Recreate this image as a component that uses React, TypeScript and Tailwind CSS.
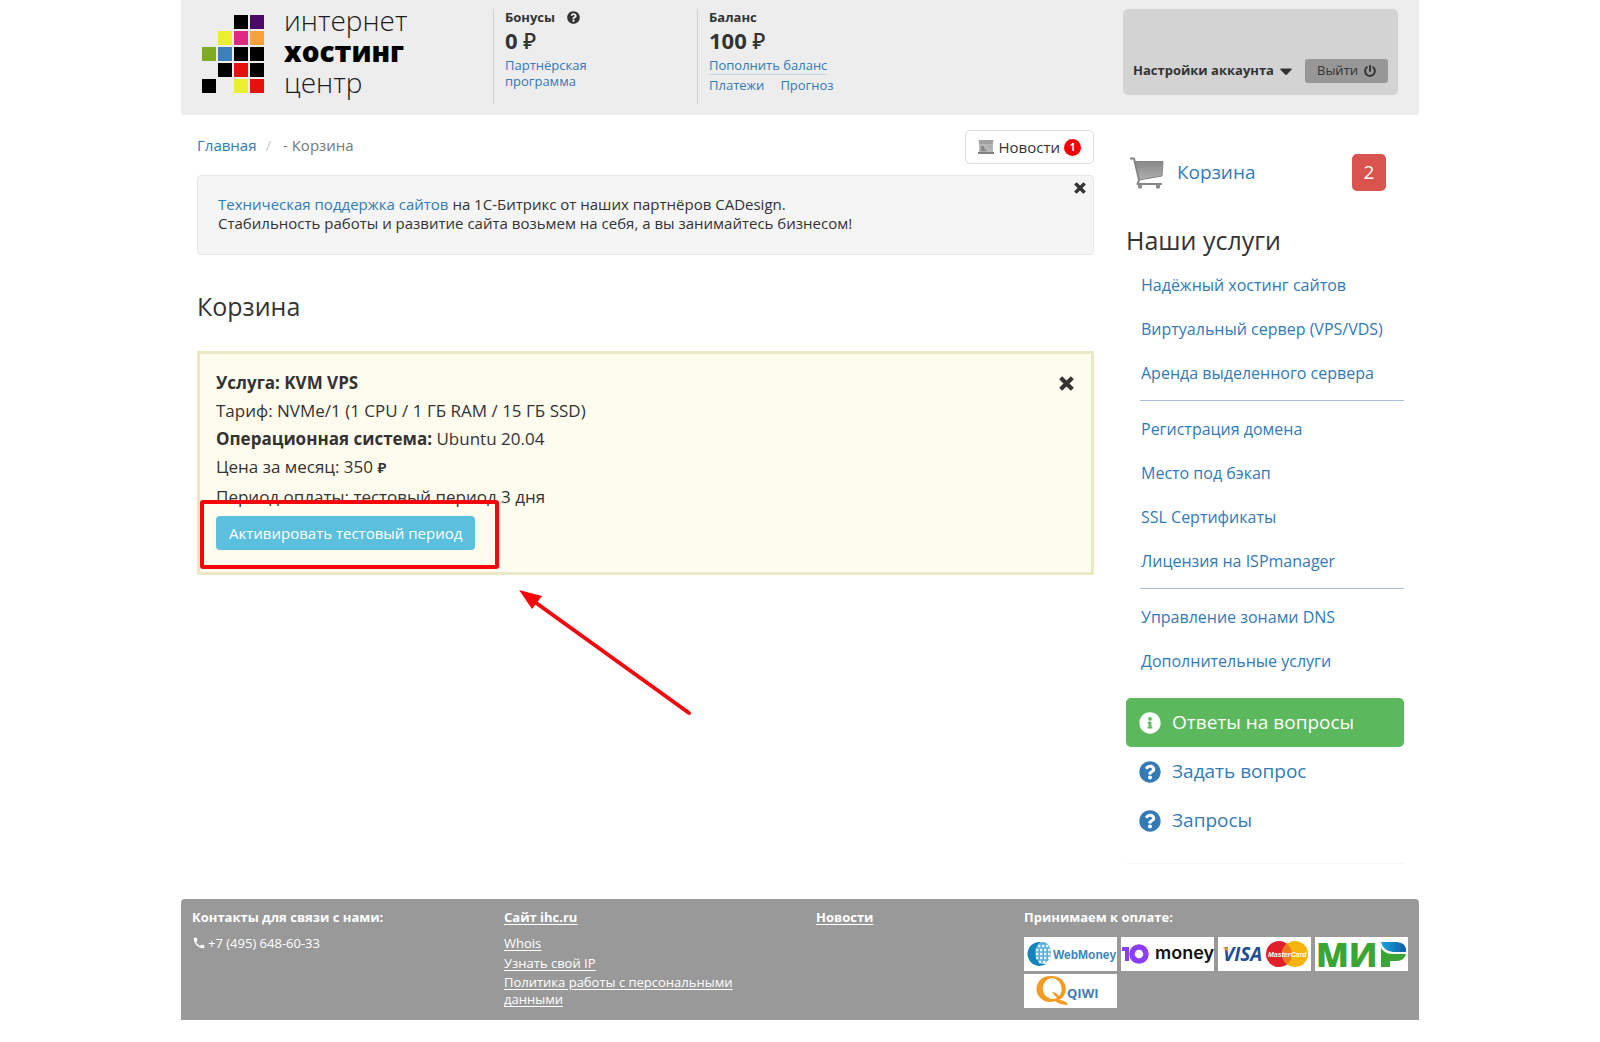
import React from "react";
import { FaInfoCircle, FaPowerOff, FaQuestionCircle, FaCaretDown } from "react-icons/fa";
import { MdCall } from "react-icons/md";

const logoCells: [number, number, string][] = [
  [2, 0, "#000000"], [3, 0, "#4b0a63"],
  [1, 1, "#eaf02f"], [2, 1, "#dd2a80"], [3, 1, "#f9a13a"],
  [0, 2, "#7eab22"], [1, 2, "#3c7fba"], [2, 2, "#000000"], [3, 2, "#000000"],
  [1, 3, "#000000"], [2, 3, "#e5120c"], [3, 3, "#000000"],
  [0, 4, "#000000"], [2, 4, "#eaf02f"], [3, 4, "#e5120c"],
];

const serviceGroups = [
  ["Надёжный хостинг сайтов", "Виртуальный сервер (VPS/VDS)", "Аренда выделенного сервера"],
  ["Регистрация домена", "Место под бэкап", "SSL Сертификаты", "Лицензия на ISPmanager"],
  ["Управление зонами DNS", "Дополнительные услуги"],
];

function CrossIcon({ className }: { className: string }) {
  return (
    <svg viewBox="0 0 14 14" className={className} aria-hidden="true">
      <path d="M3 3L11 11M11 3L3 11" stroke="currentColor" strokeWidth="4" strokeLinecap="square" />
    </svg>
  );
}

function Logo() {
  return (
    <a href="#" className="flex items-start gap-[20px]">
      <svg viewBox="0 0 62 78" className="mt-[15px] h-[78px] w-[62px]" aria-hidden="true">
        {logoCells.map(([c, r, fill]) => (
          <rect key={`${c}-${r}`} x={c * 16} y={r * 16} width="14" height="14" fill={fill} />
        ))}
      </svg>
      <span className="mt-[5px] flex flex-col text-[28px] leading-[31px] text-[#1c1c1c]">
        <span className="font-light">интернет</span>
        <span className="font-extrabold text-black">хостинг</span>
        <span className="font-light">центр</span>
      </span>
    </a>
  );
}

function Header() {
  return (
    <header className="flex h-[115px] rounded-b-xs bg-[#ededed]">
      <div className="w-[312px] shrink-0 pl-[21px]">
        <Logo />
      </div>
      <div className="mt-[9px] h-[95px] w-[204px] shrink-0 border-l border-[#d0d0d0] pl-[11px] text-[13px]">
        <div className="flex h-[17px] items-center gap-[12px] font-bold">
          Бонусы <FaQuestionCircle className="size-[13px]" />
        </div>
        <div className="text-[22px] leading-[28px]">
          <b>0</b> <span className="font-medium">₽</span>
        </div>
        <a href="#" className="mt-[3px] block w-[110px] leading-4 text-[#337ab7]">
          Партнёрская программа
        </a>
      </div>
      <div className="mt-[9px] h-[95px] border-l border-[#d0d0d0] pl-[11px] text-[13px]">
        <div className="flex h-[17px] items-center font-bold">Баланс</div>
        <div className="text-[22px] leading-[28px]">
          <b>100</b> <span className="font-medium">₽</span>
        </div>
        <a href="#" className="mt-[3px] block w-fit border-b border-[#c5d5e4] leading-[17px] text-[#337ab7]">
          Пополнить баланс
        </a>
        <div className="flex gap-[16px] leading-[20px] text-[#337ab7]">
          <a href="#">Платежи</a>
          <a href="#">Прогноз</a>
        </div>
      </div>
      <div className="mt-[9px] mr-[21px] ml-auto flex h-[86px] w-[275px] items-end justify-between rounded-[5px] bg-[#d3d3d3] pr-[10px] pb-[12px] pl-[10px] text-[13px]">
        <button type="button" className="flex h-6 items-center gap-[4px] font-bold">
          Настройки аккаунта <FaCaretDown className="h-[20px] w-[16px]" />
        </button>
        <button type="button" className="flex h-6 w-[83px] items-center justify-center gap-[6px] rounded-[3px] bg-[#979797]">
          Выйти <FaPowerOff className="size-[12px]" />
        </button>
      </div>
    </header>
  );
}

function NewsIcon() {
  return (
    <svg viewBox="0 0 16 14" className="h-[14px] w-[16px]" aria-hidden="true">
      <path d="M0 0H16L15 2V12L16 14H0L1 12V2Z" fill="#b8b8b8" />
      <path d="M1 1H15M1 3H15" stroke="#8b8b8b" strokeWidth="1" />
      <path d="M3 6H6V8L9 11H3ZM10 6H14M10 8H14" fill="#858585" stroke="#999" strokeWidth="0.5" />
      <path d="M0 13H16" stroke="#808080" strokeWidth="2" />
    </svg>
  );
}

function CartIcon() {
  return (
    <svg viewBox="0 0 34 32" className="h-[32px] w-[34px]" aria-hidden="true">
      <defs>
        <linearGradient id="cart-fill" x1="0" y1="0" x2="0" y2="1">
          <stop offset="0" stopColor="#878787" />
          <stop offset="1" stopColor="#b0b0b0" />
        </linearGradient>
      </defs>
      <path d="M5 4H33L32 19L9 23Z" fill="url(#cart-fill)" />
      <path d="M0 1.500H4L9 23L7.500 27H32" fill="none" stroke="#858585" strokeWidth="2" strokeLinejoin="round" />
      <path d="M5 4.500H33L32 19L9 23" fill="none" stroke="#858585" strokeWidth="1" />
      <circle cx="10" cy="29.500" r="2.200" fill="#8c8c8c" />
      <circle cx="28" cy="29.500" r="2.200" fill="#8c8c8c" />
    </svg>
  );
}

function Annotation() {
  return (
    <>
      <div className="pointer-events-none absolute top-[146px] left-0 h-[69px] w-[299px] rounded-[3px] border-4 border-[#f5060a]" />
      <svg viewBox="0 0 176 130" className="pointer-events-none absolute top-[235px] left-[318px] h-[130px] w-[176px]" aria-hidden="true">
        <path d="M14 11L171 124" stroke="#f5060a" strokeWidth="4" strokeLinecap="round" />
        <path d="M1 1L24 7L14 20Z" fill="#f5060a" />
      </svg>
    </>
  );
}

function Main() {
  return (
    <main className="min-w-0 flex-1 pt-[15px]">
      <div className="flex items-start justify-between">
        <nav aria-label="breadcrumb" className="flex h-[30px] items-center text-[15px] text-[#777]">
          <a href="#" className="text-[#337ab7]">Главная</a>
          <span className="mr-[12px] ml-[9px] text-[#ccc]">/</span>
          <span>- Корзина</span>
        </nav>
        <button type="button" className="flex h-[34px] items-center gap-1 rounded-[5px] border border-[#ddd] px-[12px] text-[15px]">
          <NewsIcon />
          Новости
          <span className="flex size-[17px] items-center justify-center rounded-full bg-[#f50000] text-[10px] font-bold text-white">1</span>
        </button>
      </div>

      <section className="mt-[11px] flex h-[80px] items-start justify-between rounded-[4px] border border-[#e6e6e6] bg-[#f5f5f5] pr-[6px] pl-[20px]">
        <p className="mt-[19px] text-[15px] leading-[19px]">
          <a href="#" className="text-[#337ab7]">Техническая поддержка сайтов</a> на 1С-Битрикс от наших партнёров CADesign.
          <br />
          Стабильность работы и развитие сайта возьмем на себя, а вы занимайтесь бизнесом!
        </p>
        <button type="button" aria-label="Закрыть" className="mt-[5px] p-[1px]">
          <CrossIcon className="size-[12px]" />
        </button>
      </section>

      <h1 className="mt-[34px] text-[25px] leading-[34px]">Корзина</h1>

      <section className="relative mt-[28px] flex h-[224px] items-start justify-between border-3 border-[#ede7c3] bg-[#fefcee] pt-[15px] pr-[17px] pl-[16px]">
        <div className="text-[17px] leading-7">
          <p className="font-bold">Услуга: KVM VPS</p>
          <p>Тариф: NVMe/1 (1 CPU / 1 ГБ RAM / 15 ГБ SSD)</p>
          <p><b>Операционная система:</b> Ubuntu 20.04</p>
          <p>Цена за месяц: 350 <span className="text-[15px] font-semibold">₽</span></p>
          <p className="mt-[2px]">Период оплаты: тестовый период 3 дня</p>
          <button type="button" className="mt-[5px] flex h-[34px] items-center rounded-[4px] bg-[#5bc0de] px-[13px] text-[15px] text-white">
            Активировать тестовый период
          </button>
        </div>
        <button type="button" aria-label="Удалить" className="mt-[7px]">
          <CrossIcon className="size-[15px]" />
        </button>
        <Annotation />
      </section>
    </main>
  );
}

function Sidebar() {
  return (
    <aside className="w-[278px] shrink-0 pt-[39px]">
      <div className="flex h-[37px] items-center pr-[18px] pl-[4px]">
        <CartIcon />
        <a href="#" className="ml-[13px] text-[19px] text-[#337ab7]">Корзина</a>
        <span className="ml-auto flex h-[37px] w-[34px] items-center justify-center rounded-[5px] bg-[#d9534f] text-[19px] text-white">2</span>
      </div>
      <h2 className="mt-[32px] text-[25px] leading-[34px]">Наши услуги</h2>
      <div className="mt-[6px] pl-[14px]">
        {serviceGroups.map((group, i) => (
          <ul key={i} className="border-[#a9c0d9] not-first:mt-[5px] not-first:border-t not-first:pt-[6px]">
            {group.map((name) => (
              <li key={name} className="flex h-11 items-center pl-px text-[16px]">
                <a href="#" className="whitespace-nowrap text-[#337ab7]">{name}</a>
              </li>
            ))}
          </ul>
        ))}
      </div>
      <nav className="mt-[15px] flex flex-col border-b border-[#f7f7f7] pb-[18px] text-[19px] text-[#337ab7]">
        <a href="#" className="flex h-[49px] items-center gap-[11px] rounded-[5px] bg-[#5cb85c] pl-[13px] text-white">
          <FaInfoCircle className="size-[22px]" /> Ответы на вопросы
        </a>
        <a href="#" className="flex h-[49px] items-center gap-[11px] pl-[13px]">
          <FaQuestionCircle className="size-[22px]" /> Задать вопрос
        </a>
        <a href="#" className="flex h-[49px] items-center gap-[11px] pl-[13px]">
          <FaQuestionCircle className="size-[22px]" /> Запросы
        </a>
      </nav>
    </aside>
  );
}

function WebMoneyLogo() {
  return (
    <svg viewBox="0 0 93 34" role="img" aria-label="WebMoney" className="h-[34px] w-[93px] bg-white">
      <path d="M17 5A12 12 0 1 0 22 27Q12 27 12 17Q12 8 17 5Z" fill="#1583bd" />
      <ellipse cx="19" cy="15.500" rx="8" ry="10.500" fill="#5aaedb" />
      <path d="M14 9H25M12 13H27M12 17H27M12 21H26M15 25H23" stroke="#e8f5fc" strokeWidth="2.400" strokeDasharray="2.400 1.600" />
      <text x="29" y="22" fontFamily="Liberation Sans, sans-serif" fontWeight="700" fontSize="12" fill="#3c83b8">WebMoney</text>
    </svg>
  );
}

function YooMoneyLogo() {
  return (
    <svg viewBox="0 0 93 34" role="img" aria-label="ЮMoney" className="h-[34px] w-[93px] bg-white">
      <path d="M1 10L8 10V24H4V14H1Z" fill="#8b3ffd" />
      <circle cx="18" cy="17" r="7" fill="none" stroke="#8b3ffd" strokeWidth="5.500" />
      <text x="34" y="22" fontFamily="Inter, sans-serif" fontWeight="600" fontSize="18" fill="#111">money</text>
    </svg>
  );
}

function CardsLogo() {
  return (
    <svg viewBox="0 0 93 34" role="img" aria-label="Visa, MasterCard" className="h-[34px] w-[93px] bg-white">
      <text x="5" y="24" fontFamily="Open Sans, sans-serif" fontWeight="700" fontStyle="italic" fontSize="19" fill="#1d4f93">VISA</text>
      <path d="M4 10.500H9L10.500 16Q8 12 4 10.500Z" fill="#f0a528" />
      <circle cx="61" cy="17" r="13" fill="#e0202a" />
      <circle cx="77" cy="17" r="13" fill="#f7b40c" />
      <path d="M69 6.700A13 13 0 0 1 69 27.300A13 13 0 0 1 69 6.700Z" fill="#ee7a1c" />
      <text x="50" y="20" fontFamily="Liberation Sans, sans-serif" fontWeight="700" fontStyle="italic" fontSize="7" fill="#fff">MasterCard</text>
    </svg>
  );
}

function MirLogo() {
  return (
    <svg viewBox="0 0 93 34" role="img" aria-label="МИР" className="h-[34px] w-[93px] overflow-visible bg-white">
      <defs>
        <linearGradient id="mir-wing" x1="0" y1="0" x2="1" y2="0">
          <stop offset="0" stopColor="#18a5dc" />
          <stop offset="1" stopColor="#0d5ba7" />
        </linearGradient>
      </defs>
      <text x="1" y="30" fontFamily="Open Sans, sans-serif" fontWeight="800" fontSize="34" fill="#3ba435">МИ</text>
      <path d="M66 11Q70 17 78 17H91Q89 24 82 24H75V30H66Z" fill="#3ba435" />
      <path d="M66 5H82Q92 6 91 15H78Q68 14 66 5Z" fill="url(#mir-wing)" />
    </svg>
  );
}

function QiwiLogo() {
  return (
    <svg viewBox="0 0 93 34" role="img" aria-label="QIWI" className="h-[34px] w-[93px] bg-white">
      <path fillRule="evenodd" d="M27 2A13.500 13 0 0 1 38 24Q36 26 34 26Q42 26 44 31Q36 31 31 27A13.500 13 0 1 1 27 2ZM28 4A10 10.500 0 1 0 33 24L28 18Q32 18 35 22A11 11 0 0 0 28 4Z" fill="#f59a23" />
      <text x="43" y="24" fontFamily="Open Sans, sans-serif" fontWeight="700" fontSize="13" fill="#3f7db8">QIWI</text>
    </svg>
  );
}

function Footer() {
  return (
    <footer className="mt-[35px] flex h-[121px] rounded-t-[4px] bg-[#999] pt-[8px] pl-[11px] text-[13px] text-white">
      <div className="w-[312px] shrink-0">
        <p className="leading-5 font-bold">Контакты для связи с нами:</p>
        <p className="mt-[6px] flex items-center gap-[2px] leading-5">
          <MdCall className="size-[14px]" /> +7 (495) 648-60-33
        </p>
      </div>
      <div className="w-[312px] shrink-0 underline underline-offset-2">
        <a href="#" className="block leading-5 font-bold">Сайт ihc.ru</a>
        <a href="#" className="mt-[6px] block leading-5">Whois</a>
        <a href="#" className="block leading-5">Узнать свой IP</a>
        <a href="#" className="mt-px block w-[240px] leading-[17px]">Политика работы с персональными данными</a>
      </div>
      <div className="w-[208px] shrink-0">
        <a href="#" className="leading-5 font-bold underline underline-offset-2">Новости</a>
      </div>
      <div className="min-w-0 flex-1">
        <p className="leading-5 font-bold">Принимаем к оплате:</p>
        <div className="mt-[10px] flex flex-wrap gap-x-1 gap-y-[3px]">
          <WebMoneyLogo />
          <YooMoneyLogo />
          <CardsLogo />
          <MirLogo />
          <QiwiLogo />
        </div>
      </div>
    </footer>
  );
}

export default function App() {
  return (
    <div className="min-h-screen bg-white font-['Open_Sans','Noto_Sans',sans-serif] text-[#333]">
      <div className="mx-auto max-w-[1238px]">
        <Header />
        <div className="flex gap-8 pr-[15px] pl-4">
          <Main />
          <Sidebar />
        </div>
        <Footer />
      </div>
    </div>
  );
}
